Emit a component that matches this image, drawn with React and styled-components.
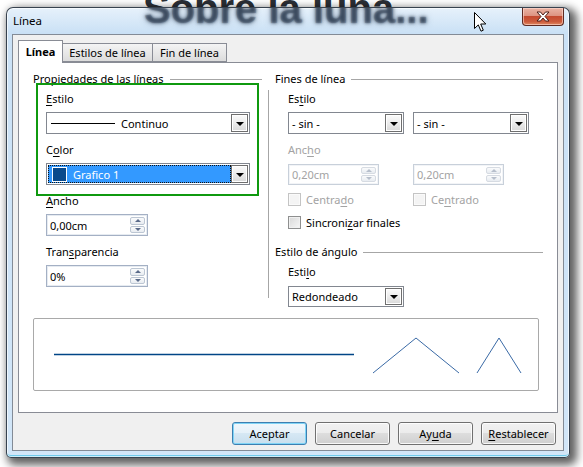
import React from 'react';
import styled, { createGlobalStyle, css } from 'styled-components';

const Global = createGlobalStyle`
  html, body { margin: 0; padding: 0; }
  body {
    width: 583px; height: 467px; overflow: hidden; background: #fff;
    font-family: "Noto Sans", "Open Sans", sans-serif; font-size: 11px; color: #000;
  }
  * { box-sizing: border-box; }
`;

const Desktop = styled.div`
  position: relative;
  width: 583px;
  height: 467px;
  overflow: hidden;
  background: #fff;
`;

const BackdropTitle = styled.div`
  position: absolute;
  left: 143px;
  top: -14px;
  font: bold 40px "Liberation Sans", Arial, sans-serif;
  color: #2b2f36;
  white-space: nowrap;
`;

const Cursor = styled.svg`
  position: absolute;
  left: 474px;
  top: 12px;
  z-index: 5;
`;

const Window = styled.div`
  position: absolute;
  left: 6px;
  top: 7px;
  width: 564px;
  height: 451px;
  border: 1px solid rgba(38, 48, 60, 0.9);
  border-radius: 7px 7px 5px 5px;
  background: linear-gradient(180deg, #e6f1fb 0px, #c9e0f5 26px, #cae1f6 27px, #d2e6f8 100%);
  box-shadow: 4px 4px 9px 3px rgba(0, 0, 0, 0.62), inset 0 0 0 1px rgba(255, 255, 255, 0.65), inset 0 -2px 0 0 rgba(70, 190, 230, 0.7);
  display: flex;
  flex-direction: column;
`;

const TitleBar = styled.div`
  position: relative;
  height: 26px;
  display: flex;
  align-items: flex-start;
  padding-left: 6px;
  overflow: hidden;
  border-radius: 6px 6px 0 0;
`;

const GlassReflection = styled.div`
  position: absolute;
  left: 137px;
  top: -21px;
  font: bold 40px "Liberation Sans", Arial, sans-serif;
  color: rgba(60, 75, 95, 0.3);
  text-shadow: 0 0 3px rgba(40, 55, 75, 0.85), 0 0 6px rgba(60, 80, 105, 0.55);
  white-space: nowrap;
  pointer-events: none;
`;

const TitleText = styled.div`
  position: relative;
  flex: 1;
  margin-top: 6px;
  line-height: 14px;
  font-size: 11.5px;
  color: #000;
`;

const CloseButton = styled.div`
  position: relative;
  width: 42px;
  height: 18px;
  margin-right: 5px;
  border: 1px solid #5e2a22;
  border-top: none;
  border-radius: 0 0 4px 4px;
  background: linear-gradient(180deg, #eab3a4 0%, #dd9482 45%, #c44a30 50%, #cc5b3c 80%, #e08a62 100%);
  box-shadow: inset 0 0 0 1px rgba(255, 220, 210, 0.6);
  display: flex;
  align-items: center;
  justify-content: center;
`;

const Client = styled.div`
  margin: 0 5px 6px 5px;
  flex: 1;
  border: 1px solid #838b96;
  background: #f0f0f0;
  padding: 5px 5px 0 5px;
  display: flex;
  flex-direction: column;
`;

const TabBar = styled.div`
  display: flex;
  align-items: flex-end;
  height: 22px;
  position: relative;
  z-index: 1;
`;

const Tab = styled.div`
  width: ${p => p.$w}px;
  height: ${p => (p.$active ? 23 : 19)}px;
  margin-bottom: ${p => (p.$active ? -1 : 0)}px;
  margin-left: ${p => (p.$first ? 0 : -1)}px;
  border: 1px solid #898c95;
  border-bottom: ${p => (p.$active ? 'none' : '1px solid #898c95')};
  background: ${p => (p.$active ? '#fff' : 'linear-gradient(180deg, #f4f4f4 0%, #e8e8e8 50%, #dcdcdc 100%)')};
  font-weight: ${p => (p.$active ? 700 : 400)};
  display: flex;
  align-items: center;
  justify-content: center;
  padding-bottom: ${p => (p.$active ? 1 : 0)}px;
  position: relative;
  z-index: ${p => (p.$active ? 2 : 1)};
`;

const Panel = styled.div`
  width: 540px;
  height: 351px;
  border: 1px solid #898c95;
  background: #fff;
  padding: 8px 14px 0 14px;
`;

const Columns = styled.div`
  display: grid;
  grid-template-columns: 229px 1px 1fr;
  column-gap: 6px;
  align-items: start;
`;

const Column = styled.div`
  display: flex;
  flex-direction: column;
`;

const VSeparator = styled.div`
  margin-top: 19px;
  height: 208px;
  background: #a6a6a6;
`;

const SectionHeader = styled.div`
  display: flex;
  align-items: center;
  line-height: 16px;
  height: 16px;
  margin-top: ${p => p.$mt || 0}px;
  white-space: nowrap;
  &::after {
    content: '';
    flex: 1;
    height: 1px;
    margin-left: 6px;
    background: #a6a6a6;
  }
`;

const Indented = styled.div`
  padding-left: 13px;
  display: flex;
  flex-direction: column;
  align-items: flex-start;
`;

const Highlight = styled.div`
  position: relative;
  display: flex;
  flex-direction: column;
  &::before {
    content: '';
    position: absolute;
    inset: -4px -9px -11px -10px;
    border: 2px solid #0f990f;
    pointer-events: none;
  }
`;

const Label = styled.div`
  line-height: 16px;
  height: 16px;
  margin-top: ${p => p.$mt || 0}px;
  margin-bottom: ${p => (p.$mb ?? 5)}px;
  color: ${p => (p.$disabled ? '#a3a3a3' : '#000')};
  white-space: nowrap;
`;

const U = styled.span`
  text-decoration: underline;
  text-underline-offset: 2px;
`;

const Row = styled.div`
  display: flex;
  align-items: center;
  gap: ${p => p.$gap || 0}px;
  margin-top: ${p => p.$mt || 0}px;
`;

const Select = styled.div`
  width: ${p => p.$w}px;
  height: ${p => p.$h || 22}px;
  border: 1px solid #828790;
  background: #fff;
  padding: 1px;
  display: flex;
  align-items: stretch;
  flex-shrink: 0;
`;

const SelectValue = styled.div`
  flex: 1;
  display: flex;
  align-items: center;
  padding-left: 2px;
  white-space: nowrap;
  ${p => p.$selected && css`
    background: #3399ff;
    color: #fff;
    border: 1px dotted #101010;
    padding-left: 2px;
  `}
`;

const DropButton = styled.div`
  width: 17px;
  border: 1px solid #6f6f6f;
  background: linear-gradient(180deg, #fbfbfb 0%, #ececec 50%, #d9d9d9 100%);
  box-shadow: inset 0 0 0 1px #fff;
  display: flex;
  align-items: center;
  justify-content: center;
  &::after {
    content: '';
    border-left: 4px solid transparent;
    border-right: 4px solid transparent;
    border-top: 4px solid #000;
    margin-top: 1px;
  }
`;

const LineSample = styled.div`
  width: 64px;
  height: 1px;
  background: #000;
  margin-left: 1px;
  margin-right: 6px;
`;

const Swatch = styled.div`
  width: 15px;
  height: 15px;
  border: 1px solid #fff;
  background: #0a4a8c;
  margin-right: 6px;
  margin-left: 1px;
`;

const SpinBox = styled.div`
  width: ${p => p.$w}px;
  height: ${p => p.$h || 22}px;
  border: 1px solid ${p => (p.$disabled ? '#c8d0da' : '#a4b0c4')};
  box-shadow: inset 0 0 0 1px ${p => (p.$disabled ? '#f2f4f7' : '#e6ebf1')};
  background: #fff;
  padding: 1px 1px 1px 3px;
  display: flex;
  align-items: stretch;
  color: ${p => (p.$disabled ? '#a3a3a3' : '#000')};
  flex-shrink: 0;
`;

const SpinValue = styled.div`
  flex: 1;
  display: flex;
  align-items: center;
`;

const SpinButtons = styled.div`
  width: 15px;
  margin-right: 1px;
  display: flex;
  flex-direction: column;
  gap: 1px;
  padding: 1px 0;
`;

const SpinBtn = styled.div`
  flex: 1;
  border: 1px solid ${p => (p.$disabled ? '#d6dbe2' : '#bcc6d3')};
  border-radius: 2px;
  background: linear-gradient(180deg, #fafbfc, #e8ecf1);
  display: flex;
  align-items: center;
  justify-content: center;
  &::after {
    content: '';
    border-left: 3px solid transparent;
    border-right: 3px solid transparent;
    ${p => (p.$down
      ? css`border-top: 3px solid ${p.$disabled ? '#b7bfcc' : '#5a6b8a'};`
      : css`border-bottom: 3px solid ${p.$disabled ? '#b7bfcc' : '#5a6b8a'};`)}
  }
`;

const CheckItem = styled.div`
  display: flex;
  align-items: center;
  height: 16px;
  width: ${p => (p.$w ? `${p.$w}px` : 'auto')};
  color: ${p => (p.$disabled ? '#a3a3a3' : '#000')};
  white-space: nowrap;
`;

const CheckBox = styled.div`
  width: 13px;
  height: 13px;
  margin-right: 5px;
  border: 1px solid ${p => (p.$disabled ? '#c4c4c4' : '#8e8f8f')};
  background: ${p => (p.$disabled ? '#f4f4f4' : 'linear-gradient(135deg, #d8d8d8, #f6f6f6)')};
  box-shadow: inset 0 0 0 1px ${p => (p.$disabled ? '#fafafa' : '#f0f0f0')};
`;

const Preview = styled.div`
  margin-top: 11px;
  width: 506px;
  height: 73px;
  border: 1px solid #a9a9a9;
  border-radius: 2px;
  background: #fff;
`;

const ButtonRow = styled.div`
  display: flex;
  justify-content: flex-end;
  gap: 8px;
  margin-top: 9px;
  padding-right: 2px;
`;

const Button = styled.div`
  width: 75px;
  height: 23px;
  border: 1px solid ${p => (p.$default ? '#3c7fb1' : '#707070')};
  border-radius: 3px;
  background: ${p => (p.$default
    ? 'linear-gradient(180deg, #f0f7fc 0%, #e5f1f9 50%, #d6e8f4 50%, #c8dfee 100%)'
    : 'linear-gradient(180deg, #f2f2f2 0%, #ebebeb 50%, #dddddd 50%, #cfcfcf 100%)')};
  box-shadow: inset 0 0 0 1px ${p => (p.$default ? '#7fd4f6' : 'rgba(255,255,255,0.85)')};
  display: flex;
  align-items: center;
  justify-content: center;
  color: #000;
`;

function Dropdown({ w, h, children, selected }) {
  return (
    <Select $w={w} $h={h}>
      <SelectValue $selected={selected}>{children}</SelectValue>
      <DropButton />
    </Select>
  );
}

function Spinner({ w, h, value, disabled }) {
  return (
    <SpinBox $w={w} $h={h} $disabled={disabled}>
      <SpinValue>{value}</SpinValue>
      <SpinButtons>
        <SpinBtn $disabled={disabled} />
        <SpinBtn $down $disabled={disabled} />
      </SpinButtons>
    </SpinBox>
  );
}

function Check({ children, disabled, w }) {
  return (
    <CheckItem $disabled={disabled} $w={w}>
      <CheckBox $disabled={disabled} />
      <span>{children}</span>
    </CheckItem>
  );
}

export default function App() {
  return (
    <Desktop>
      <Global />
      <BackdropTitle>Sobre la luna...</BackdropTitle>
      <Window>
        <TitleBar>
          <GlassReflection aria-hidden="true">Sobre la luna...</GlassReflection>
          <TitleText>Línea</TitleText>
          <CloseButton>
            <svg width="14" height="11" viewBox="0 0 14 11">
              <path d="M1 1 H4.5 L7 4 L9.5 1 H13 L9 5.5 L13 10 H9.5 L7 7 L4.5 10 H1 L5 5.5 Z" fill="#fff" stroke="#4a1e18" strokeWidth="1" strokeLinejoin="round" />
            </svg>
          </CloseButton>
        </TitleBar>
        <Client>
          <TabBar>
            <Tab $active $first $w={45}>Línea</Tab>
            <Tab $w={91}>Estilos de línea</Tab>
            <Tab $w={75}>Fin de línea</Tab>
          </TabBar>
          <Panel>
            <Columns>
              <Column>
                <SectionHeader>Propiedades de las líneas</SectionHeader>
                <Indented>
                  <Highlight>
                    <Label $mt={4}><U>E</U>stilo</Label>
                    <Dropdown w={204}>
                      <LineSample />
                      Continuo
                    </Dropdown>
                    <Label $mt={8}>C<U>o</U>lor</Label>
                    <Dropdown w={204} selected>
                      <Swatch />
                      Grafico 1
                    </Dropdown>
                  </Highlight>
                  <Label $mt={8} $mb={5}><U>A</U>ncho</Label>
                  <Spinner w={102} value="0,00cm" />
                  <Label $mt={8} $mb={5}>Tran<U>s</U>parencia</Label>
                  <Spinner w={102} value="0%" />
                </Indented>
              </Column>
              <VSeparator />
              <Column>
                <SectionHeader>Fines de línea</SectionHeader>
                <Indented>
                  <Label $mt={4}>Es<U>t</U>ilo</Label>
                  <Row $gap={9}>
                    <Dropdown w={116}>- sin -</Dropdown>
                    <Dropdown w={116}>- sin -</Dropdown>
                  </Row>
                  <Label $mt={8} $mb={6} $disabled>Anc<U>h</U>o</Label>
                  <Row $gap={34}>
                    <Spinner w={91} h={21} value="0,20cm" disabled />
                    <Spinner w={91} h={21} value="0,20cm" disabled />
                  </Row>
                  <Row $mt={6}>
                    <Check disabled w={125}>Centra<U>d</U>o</Check>
                    <Check disabled>Ce<U>n</U>trado</Check>
                  </Row>
                  <Row $mt={7}>
                    <Check>Sincroni<U>z</U>ar finales</Check>
                  </Row>
                </Indented>
                <SectionHeader $mt={14}>Estilo de ángulo</SectionHeader>
                <Indented>
                  <Label $mt={4} $mb={6}>Esti<U>l</U>o</Label>
                  <Dropdown w={116} h={21}>Redondeado</Dropdown>
                </Indented>
              </Column>
            </Columns>
            <Preview>
              <svg width="504" height="71" viewBox="0 0 504 71">
                <line x1="20" y1="35.5" x2="320" y2="35.5" stroke="#004586" strokeWidth="1.3" />
                <polyline points="339,54 382,19 425,54" fill="none" stroke="#3a6aa6" strokeWidth="1" />
                <polyline points="443,54 465,19 487,54" fill="none" stroke="#3a6aa6" strokeWidth="1" />
              </svg>
            </Preview>
          </Panel>
          <ButtonRow>
            <Button $default>Aceptar</Button>
            <Button>Cancelar</Button>
            <Button>Ay<U>u</U>da</Button>
            <Button><U>R</U>establecer</Button>
          </ButtonRow>
        </Client>
      </Window>
      <Cursor width="13" height="21" viewBox="0 0 13 21">
        <path d="M0.5 0.5 L0.5 16.5 L4.3 12.9 L7 19.2 L9.3 18.2 L6.7 12 L11.8 12 Z" fill="#fff" stroke="#000" strokeWidth="1" strokeLinejoin="round" />
      </Cursor>
    </Desktop>
  );
}
